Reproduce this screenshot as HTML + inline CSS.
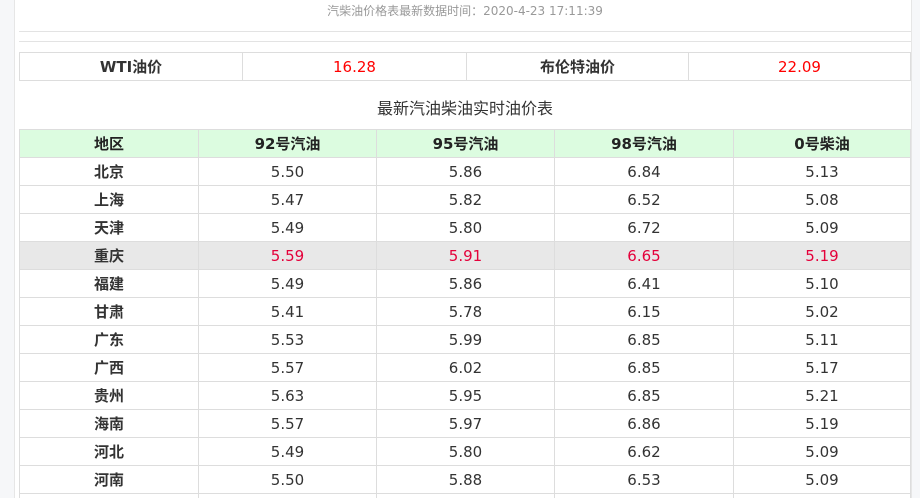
<!DOCTYPE html>
<html style="overflow:hidden;height:498px"><head><meta charset="utf-8"><style>
*{margin:0;padding:0;box-sizing:border-box}
body{width:920px;height:498px;overflow:hidden;background:#fff;font-family:"DejaVu Sans","Noto Sans CJK SC",sans-serif;color:#333;position:relative}
.ls{position:absolute;left:0;top:0;width:15px;height:498px;background:#f6f7f9;border-right:1px solid #e6e6e6}
.rs{position:absolute;left:911px;top:0;width:9px;height:498px;background:#f6f7f9;border-left:1px solid #e6e6e6}
.top{position:absolute;left:19px;width:892px;top:2px;text-align:center;font-size:12px;color:#999}
.hl{position:absolute;left:19px;width:892px;height:1px;background:#e3e3e3}
.wrap{position:absolute;left:0;top:0;width:920px;height:498px;overflow:hidden}
table{position:absolute;left:19px;width:892px;border-collapse:collapse;table-layout:fixed}
td{border:1px solid #ddd;text-align:center;height:28px;padding:0;font-size:15px}
.b{font-weight:bold;font-size:15px}
.r{color:#f00}
.title{position:absolute;left:19px;width:892px;top:95px;text-align:center;font-size:16px;color:#333}
.g td{background:#dcfce0;font-weight:bold;font-size:15px;color:#222}
.h td{background:#e8e8e8}
.h td.r{color:#e4003a}
</style></head><body><div class="wrap">
<div class="ls"></div><div class="rs"></div>
<div class="top">汽柴油价格表最新数据时间：2020-4-23 17:11:39</div>
<div class="hl" style="top:31px"></div>
<div class="hl" style="top:41px"></div>
<table style="top:52px"><colgroup><col style="width:223px"><col style="width:224px"><col style="width:222px"><col></colgroup>
<tr><td class="b">WTI油价</td><td class="r">16.28</td><td class="b">布伦特油价</td><td class="r">22.09</td></tr></table>
<div class="title">最新汽油柴油实时油价表</div>
<table style="top:129px"><colgroup><col style="width:179px"><col style="width:178px"><col style="width:178px"><col style="width:179px"><col></colgroup>
<tr class="g"><td>地区</td><td>92号汽油</td><td>95号汽油</td><td>98号汽油</td><td>0号柴油</td></tr>
<tr><td class="b">北京</td><td>5.50</td><td>5.86</td><td>6.84</td><td>5.13</td></tr>
<tr><td class="b">上海</td><td>5.47</td><td>5.82</td><td>6.52</td><td>5.08</td></tr>
<tr><td class="b">天津</td><td>5.49</td><td>5.80</td><td>6.72</td><td>5.09</td></tr>
<tr class="h"><td class="b">重庆</td><td class="r">5.59</td><td class="r">5.91</td><td class="r">6.65</td><td class="r">5.19</td></tr>
<tr><td class="b">福建</td><td>5.49</td><td>5.86</td><td>6.41</td><td>5.10</td></tr>
<tr><td class="b">甘肃</td><td>5.41</td><td>5.78</td><td>6.15</td><td>5.02</td></tr>
<tr><td class="b">广东</td><td>5.53</td><td>5.99</td><td>6.85</td><td>5.11</td></tr>
<tr><td class="b">广西</td><td>5.57</td><td>6.02</td><td>6.85</td><td>5.17</td></tr>
<tr><td class="b">贵州</td><td>5.63</td><td>5.95</td><td>6.85</td><td>5.21</td></tr>
<tr><td class="b">海南</td><td>5.57</td><td>5.97</td><td>6.86</td><td>5.19</td></tr>
<tr><td class="b">河北</td><td>5.49</td><td>5.80</td><td>6.62</td><td>5.09</td></tr>
<tr><td class="b">河南</td><td>5.50</td><td>5.88</td><td>6.53</td><td>5.09</td></tr>
<tr><td class="b">湖北</td><td>5.53</td><td>5.91</td><td>6.53</td><td>5.13</td></tr>
</table>
</div></body></html>
